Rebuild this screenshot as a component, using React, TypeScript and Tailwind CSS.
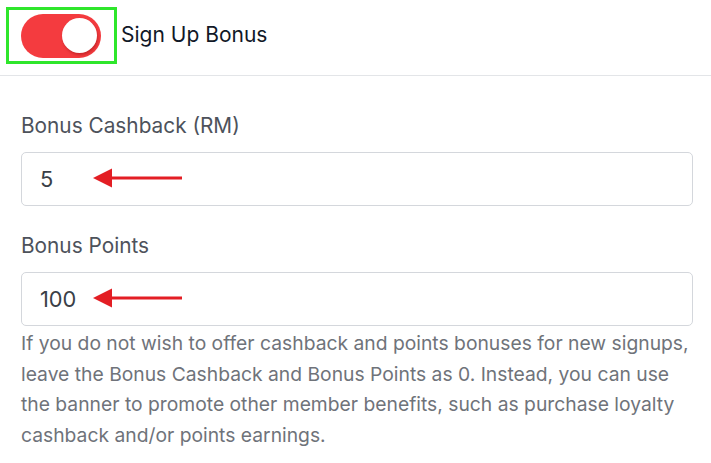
import React from "react";

function Arrow() {
  return (
    <svg
      className="absolute left-[71px] top-[15px]"
      width="90"
      height="20"
      viewBox="0 0 90 20"
    >
      <line x1="16" y1="10" x2="89" y2="10" stroke="#e31e24" strokeWidth="3" />
      <polygon points="0,10 19,0.5 19,19.5" fill="#e31e24" />
    </svg>
  );
}

function Field({ label, value, first }: { label: string; value: string; first?: boolean }) {
  return (
    <div className={first ? "pt-[36px]" : "pt-[26px]"}>
      <div className="text-[20.8px] leading-[27px] text-[#4d525b]">{label}</div>
      <div className="relative mt-[13px] h-[54px] rounded-[5px] border border-[#d4d7dc] bg-white flex items-center pl-[18px]">
        <span className="text-[21.8px] text-[#3a3f47]">{value}</span>
        <Arrow />
      </div>
    </div>
  );
}

const lines = [
  "If you do not wish to offer cashback and points bonuses for new signups,",
  "leave the Bonus Cashback and Bonus Points as 0. Instead, you can use",
  "the banner to promote other member benefits, such as purchase loyalty",
  "cashback and/or points earnings.",
];

export default function App() {
  return (
    <div
      className="w-[711px] h-[463px] bg-white overflow-hidden"
      style={{ fontFamily: "Inter, 'Noto Sans', sans-serif" }}
    >
      <div className="h-[76px] border-b border-[#e3e5e8] flex items-start">
        <div className="mt-[7px] ml-[6px] w-[111px] h-[57px] border-[3px] border-[#2ee62b] flex items-center pl-[12px]">
          <div className="relative w-[80px] h-[44px] rounded-full bg-[#f43b3f]">
            <div className="absolute right-[4px] top-[4px] w-[35px] h-[35px] rounded-full bg-white shadow-[1px_2px_3px_rgba(120,0,0,0.35)]" />
          </div>
        </div>
        <div className="ml-[4px] mt-[21px] text-[21px] leading-[28px] text-[#111827]">Sign Up Bonus</div>
      </div>
      <div className="pl-[21px] pr-[18px]">
        <Field label="Bonus Cashback (RM)" value="5" first />
        <Field label="Bonus Points" value="100" />
        <div className="mt-[2px] text-[19.3px] leading-[30.7px] text-[#6f737a]">
          {lines.map((l) => (
            <div key={l} className="whitespace-nowrap">{l}</div>
          ))}
        </div>
      </div>
    </div>
  );
}
